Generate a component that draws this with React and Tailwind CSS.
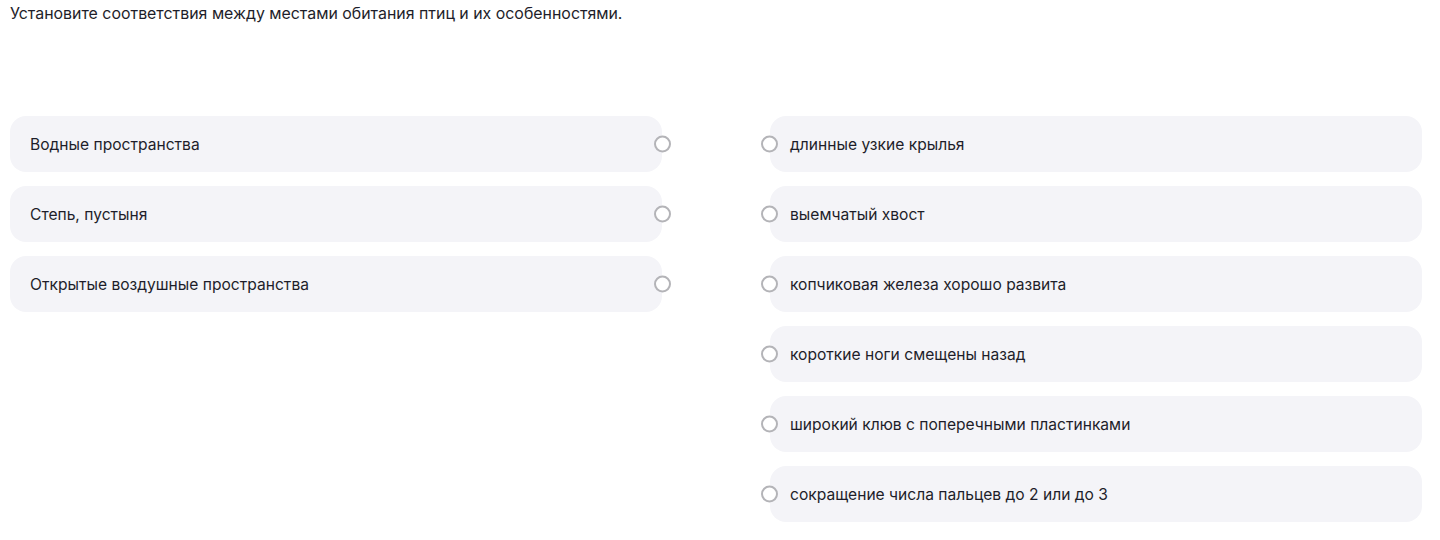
import React from "react";

const left = [
  "Водные пространства",
  "Степь, пустыня",
  "Открытые воздушные пространства",
];

const right = [
  "длинные узкие крылья",
  "выемчатый хвост",
  "копчиковая железа хорошо развита",
  "короткие ноги смещены назад",
  "широкий клюв с поперечными пластинками",
  "сокращение числа пальцев до 2 или до 3",
];

const Dot = ({ side }) => (
  <span
    className={`absolute top-1/2 -translate-y-1/2 w-[17px] h-[17px] rounded-full border-2 border-[#b4b4b8] bg-white ${
      side === "right" ? "right-[-9px]" : "left-[-9px]"
    }`}
  />
);

export default function App() {
  return (
    <div className="min-h-[540px] bg-white px-[10px] pt-[3px] font-['Inter','Noto_Sans',sans-serif] text-[#1e1e2a]">
      <p className="text-[15.9px] leading-[22px]">
        Установите соответствия между местами обитания птиц и их особенностями.
      </p>

      <div className="mt-[91px] flex gap-[108px]">
        <div className="flex w-[652px] flex-col gap-[14px]">
          {left.map((item) => (
            <div
              key={item}
              className="relative flex h-[56px] items-center rounded-[16px] bg-[#f4f4f8] pl-5 pt-[2px] text-[15.6px]"
            >
              {item}
              <Dot side="right" />
            </div>
          ))}
        </div>

        <div className="flex w-[652px] flex-col gap-[14px]">
          {right.map((item) => (
            <div
              key={item}
              className="relative flex h-[56px] items-center rounded-[16px] bg-[#f4f4f8] pl-5 pt-[2px] text-[15.6px]"
            >
              {item}
              <Dot side="left" />
            </div>
          ))}
        </div>
      </div>
    </div>
  );
}
